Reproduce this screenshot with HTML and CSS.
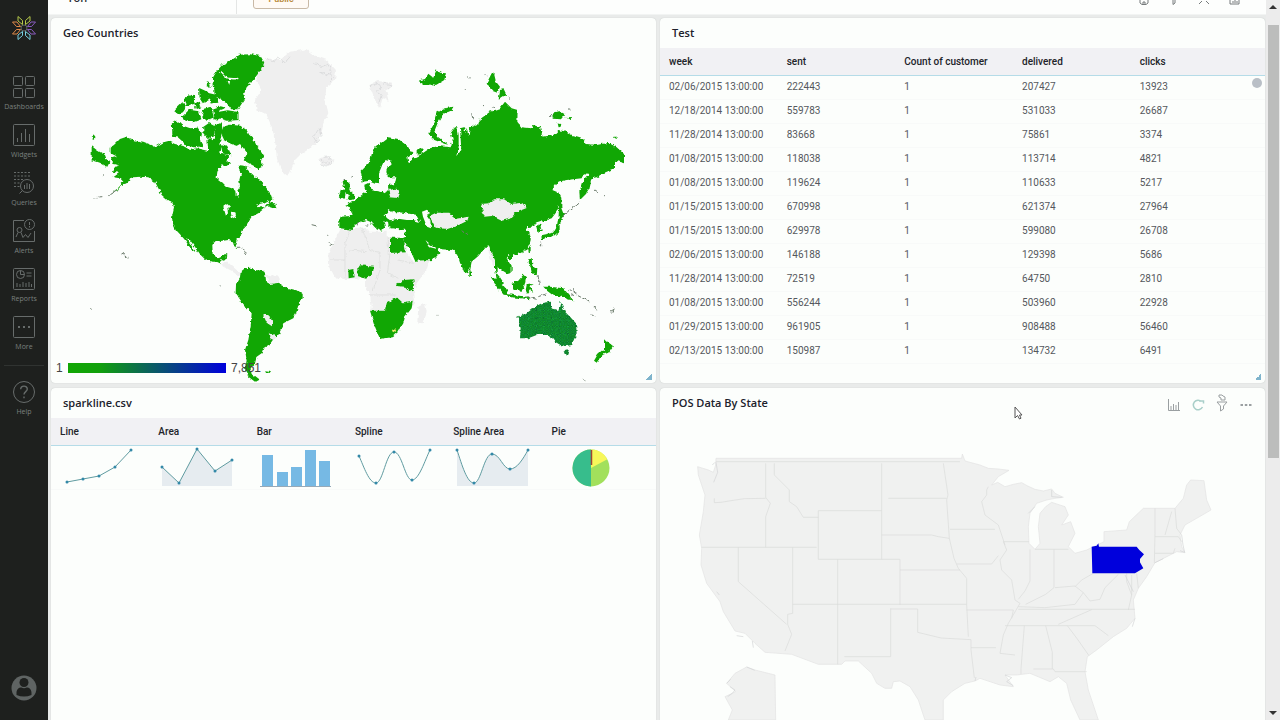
FILE: index.html
```html
<!DOCTYPE html>
<html lang="en">
<head>
<meta charset="utf-8">
<title>Dashboard</title>
<link rel="stylesheet" href="styles.css">
</head>
<body>
<nav class="sidebar">
  <a class="brand" href="#" aria-label="Home">
    <svg width="28" height="28" viewBox="-14 -14 28 28" fill="none" stroke-width="1">
      <circle r="3" stroke="#5d6664"/>
      <g stroke="#b5c84a"><path d="M-6-11.500V-7L-1.500-3.500V-7.500z"/><path d="M6-11.500V-7L1.500-3.500V-7.500z"/></g>
      <g stroke="#78cfe0"><path d="M-6 11.500V7L-1.500 3.500V7.500z"/><path d="M6 11.500V7L1.500 3.500V7.500z"/></g>
      <g stroke="#e08a4a"><path d="M-11.500-6H-7L-3.500-1.500H-7.500z"/><path d="M-11.500 6H-7L-3.500 1.500H-7.500z"/></g>
      <g stroke="#8a5cc0"><path d="M11.500-6H7L3.500-1.500H7.500z"/><path d="M11.500 6H7L3.500 1.500H7.500z"/></g>
    </svg>
  </a>
  <a class="item" href="#"><svg class="ico" viewBox="0 0 24 24"><rect x="1.500" y="1.500" width="9" height="9" rx="1"/><rect x="13.500" y="1.500" width="9" height="9" rx="1"/><rect x="1.500" y="13.500" width="9" height="9" rx="1"/><rect x="13.500" y="13.500" width="9" height="9" rx="1"/></svg><span>Dashboards</span></a>
  <a class="item" href="#"><svg class="ico" viewBox="0 0 24 24"><rect x="1.500" y="1.500" width="21" height="21" rx="1"/><path d="M5.500 19v-4M9.500 19v-9M13.500 19V6M17.500 19v-8"/></svg><span>Widgets</span></a>
  <a class="item" href="#"><svg class="ico" viewBox="0 0 24 24"><path stroke-dasharray="2 1.500" d="M2 1.500h17M2 5h17M2 8.500h10M2 12h6M2 15.500h6"/><circle cx="15" cy="15" r="6.500"/><path d="M10.500 19.500L7.500 22.500M12.500 18v-4M15 18v-6M17.500 18v-5"/></svg><span>Queries</span></a>
  <a class="item" href="#"><svg class="ico" viewBox="0 0 24 24"><path d="M12 1.500H1.500v21h21V12"/><circle cx="17.500" cy="5.500" r="5"/><path d="M17.500 3v3M17.500 7v1.500"/><circle cx="7.500" cy="11" r="2.500"/><path d="M4 18l2-4.500M9 13.500l2 5 2.500-3 2.500 3 3-4.500"/></svg><span>Alerts</span></a>
  <a class="item" href="#"><svg class="ico" viewBox="0 0 24 24"><rect x="1.500" y="1.500" width="21" height="21" rx="1"/><circle cx="8.500" cy="7.500" r="4"/><path d="M8.500 3.500v4h4M14.500 6h5M14.500 9h5M5 20v-4M8 20v-3M11 20v-5M14 20v-4M17 20v-5M19.500 20v-3"/></svg><span>Reports</span></a>
  <a class="item" href="#"><svg class="ico" viewBox="0 0 24 24"><rect x="1.500" y="1.500" width="21" height="21" rx="1"/><path stroke-width="1.800" d="M6 12h2M11 12h2M16 12h2"/></svg><span>More</span></a>
  <hr class="rule">
  <a class="item" href="#"><svg class="ico" viewBox="0 0 24 24"><circle cx="12" cy="12" r="10.500"/><path stroke-width="1.400" d="M8.700 9.300c0-4.300 6.600-4.100 6.600-.3 0 2.600-3.300 2.600-3.300 5.400M12 16.500v1.800"/></svg><span>Help</span></a>
  <a class="avatar" href="#" aria-label="Account">
    <svg width="26" height="26" viewBox="0 0 26 26"><circle cx="13" cy="13" r="12.500" fill="#5f6463"/><circle cx="13" cy="7.500" r="4.500" fill="#1e201e"/><path d="M5.500 20v-2c0-3.500 2-5.500 5-5.500 1.500 1 3.500 1 5 0 3 0 5 2 5 5.500v2q-7.500 3-15 0z" fill="#1e201e"/></svg>
  </a>
</nav>

<main class="main">
  <header class="topbar">
    <div class="tab">Yoh</div>
    <button class="pill" type="button">Public</button>
    <div class="tools">
      <svg class="tool" viewBox="0 0 12 12"><path d="M2 2v8l2 1.500h4l2-1.500V2M5 11V9h2v2"/></svg>
      <svg class="tool" viewBox="0 0 12 12"><path d="M2 1h8L7 6v4L5 11.500V6z"/></svg>
      <svg class="tool" viewBox="0 0 12 12"><path d="M1 11l3-3M11 11L8 8"/></svg>
      <svg class="tool" viewBox="0 0 12 12"><path d="M2 2h9v9H2zM5 8v2M7 7v3M9 8v2"/></svg>
    </div>
  </header>

  <div class="board">
    <section class="panel">
      <div class="head"><h2>Geo Countries</h2></div>
      <svg class="map" viewBox="51 48 605 335" role="img" aria-label="World map">
        <defs>
          <linearGradient id="scale"><stop offset="0" stop-color="#11a704"/><stop offset=".2" stop-color="#11a00c"/><stop offset="1" stop-color="#0000dc"/></linearGradient>
          <pattern id="dots" width="8" height="8" patternUnits="userSpaceOnUse"><rect width="8" height="8" fill="#0c8e12"/><circle cx="2" cy="2" r="1.700" fill="#18a850"/><circle cx="6" cy="6" r="1.700" fill="#18a850"/><circle cx="6" cy="2" r="1.500" fill="#0c4a50"/><circle cx="2" cy="6" r="1.500" fill="#0c4a50"/></pattern>
          <filter id="coast" x="-5%" y="-5%" width="110%" height="110%" color-interpolation-filters="sRGB"><feTurbulence type="fractalNoise" baseFrequency=".25" numOctaves="2" seed="4" result="n"/><feDisplacementMap in="SourceGraphic" in2="n" scale="4" xChannelSelector="R" yChannelSelector="G"/></filter>
        </defs>
        <g filter="url(#coast)">
        <!-- Americas -->
        <g transform="translate(80 40) scale(.33333)">
          <path class="nodata" d="M530 80L560 55 600 60 630 35 680 28 700 45 740 60 768 90 765 120 740 140 735 175 745 220 730 250 725 280 705 315 690 325 660 345 645 360 630 400 620 408 605 395 590 350 585 300 575 260 560 225 530 210 525 180 545 150 530 120zM715 355L740 350 762 360 750 378 725 372zM425 668L445 668 470 690 482 700 478 708 455 692 430 680zM556 703L598 710 600 726 570 732z"/>
          <path class="coastline" d="M560 55l20 10 15-12 20 15 15-18M700 70l25 10 20-8 10 20-15 15-20-12M745 100l15 12-10 12M700 290l18-25 5 22-12 22zM720 358l15 12 15-14"/>
          <path class="data" d="M92 323L105 312 120 297 138 291 160 300 190 305 215 315 225 320 245 308 265 303 285 312 310 318 330 330 350 325 385 333 400 325 425 340 445 345 440 362 450 370 440 378 425 376 412 395 410 414 425 425 440 440 455 445 466 452 467 468 473 473 476 460 472 452 480 440 478 420 483 400 475 385 480 376 500 378 515 385 530 410 538 418 548 430 560 445 572 462 578 480 570 488 585 490 590 508 575 503 560 498 550 508 535 520 515 530 505 545 497 560 487 570 485 585 470 598 467 610 472 625 462 618 458 603 445 600 420 604 405 604 397 615 398 640 403 652 415 655 425 650 430 643 442 643 440 655 432 662 425 660 420 670 410 665 395 665 375 658 362 645 350 628 330 600 318 590 335 618 345 636 335 630 315 600 300 583 288 570 278 550 276 530 282 505 280 492 262 480 245 465 235 445 225 425 205 412 185 410 160 412 150 415 145 428 130 432 120 442 88 466 118 440 130 425 120 415 100 412 118 398 98 395 105 380 118 375 98 372 92 362 95 352 108 348 92 340z
          M35 318L50 330 75 345 80 358 88 368 82 380 60 368 35 360zM35 290l8-4 4 6-8 5z
          M482 695L495 685 512 683 525 690 550 692 556 705 558 725 570 732 598 728 602 735 625 745 655 752 668 762 668 775 655 795 650 815 640 835 610 850 605 865 595 885 580 898 570 912 550 925 545 940 530 950 525 970 512 985 515 1000 538 1018 525 1025 505 1010 495 990 500 960 495 930 505 900 512 860 515 820 500 805 485 785 467 760 468 735 480 715z
          M556 994l14 2-4 6-10-2z"/>
          <path class="data arctic" d="M402 112L412 95 430 75 460 60 480 47 510 45 540 50 550 68 543 85 528 105 513 125 498 140 490 160 493 175 483 190 473 205 455 205 442 188 420 175 407 165 405 150 400 135z
          M418 218l25-5 30 5v20l-30 2-26-8z
          M278 252L290 244 310 260 330 267 353 266 363 280 358 300 366 316 345 320 320 315 310 303 295 290 280 288z
          M432 262L450 257 480 260 498 272 505 285 518 297 528 320 540 332 551 350 540 355 545 372 536 388 522 375 505 366 494 360 502 345 487 325 470 315 455 310 435 300 428 285z
          M372 262l15-10 15 8-2 25-15 10-12-12zM406 258l16-6 4 20-10 35-8-5zM385 302l22-4 15 22-8 18-27-8zM425 315l15 5 10 22-20-4z
          M285 212l22-22 10 10-10 15-12 5zM315 178l15-12 13 6-3 18-18 4zM308 232l20-20 27 4 6 20-22 8-24-4zM360 148l22 10 4 20-15 8-10-15zM388 162l18 4 6 20-18 2zM366 210l25-6 8 27-22 8zM402 210l12-4 2 28-10 2zM383 130l6 2v8l-6-3zM345 192l12-4 4 12-12 4zM412 200l14-4 4 8-12 5z"/>
          <path class="sea" d="M420 97q18 28 56 20l-2-4q-36 6-50-18zM443 123l4 10 3-10zM402 195l20-8 22 8-5 5-17-4-18 4zM465 320l15-8 20 25-10 25-22 15-8-10 8-15-15-15zM430 500l12-8 8 8-8 5 2 15-6 8zM452 515l14 2 2 12-12 6zM528 494l20-4 20-10-3 10-12 14-6-6-10 4zM500 378l35 15 3 25-15-10-22-20z"/>
          <path class="nodata" d="M550 825L565 825 580 848 578 860 560 848zM567 878L592 890 580 900 568 893z"/>
          <path class="isle" d="M88 464l22-14M40 474l12-2M55 471l12-1M68 407h3M95 410h4M474 622q15-4 26 20M125 640l8 2M134 648l12 6M420 738l5 3M30 806l5 2M695 554l16 4M744 585l3 4M745 608l4 2"/>
        </g>
        <!-- Europe, Africa, Asia, Oceania -->
        <g transform="translate(320 40) scale(.33333)">
          <path class="nodata" d="M60 570L125 562 150 575 205 575 252 580 258 600 262 640 280 665 328 660 320 690 290 730 282 750 285 790 250 830 195 830 152 812 155 800 150 765 135 740 135 718 110 715 75 718 45 712 28 680 25 640 45 600zM295 800l20-10 5 25-12 35-16-2zM148 135l25-12 45 5-5 15-15 10 8 30-18-10-8 30-15-20zM505 630l15-18 12 35-12 30-8-20z"/>
          <path class="border" d="M95 565l-20 45v50H30M125 562l25 70 30 5v50M205 575v70M90 630l50 5M75 660v50M180 690l-20 60M210 640l-8 60 30 15M150 765h80M235 660l45 10"/>
          <path class="coastline" d="M150 140l22-10 10 12-12 14 14 10-8 24M190 130l25 4-10 12M0 370l15 8 20-8-4-20-20 2"/>
          <path class="data" d="M58 530L92 528 95 518 88 502 76 494 100 485 125 465 138 455 132 435 146 428 152 450 180 455 205 450 205 443 180 430 165 428 150 422 128 425 122 395 150 365 158 330 175 315 205 292 235 297 262 318 278 340 262 352 265 368 278 358 290 350 300 345 330 325 355 318 392 322 398 300 392 280 405 262 412 262 416 285 416 320 412 345 424 330 420 265 432 262 436 280 440 264 446 285 450 262 475 252 480 238 510 215 540 205 555 185 575 205 593 210 592 245 605 262 635 265 640 255 660 262 668 290 700 285 715 270 740 275 765 290 790 298 800 312 830 315 865 308 890 322 912 342 912 370 885 362 885 385 850 400 830 412 815 415 808 445 795 465 780 480 778 455 785 430 808 402 792 400 785 415 740 420 715 425 697 450 720 460 722 485 710 515 695 535 665 545 650 550 632 560 618 562 632 590 632 600 628 615 620 630 600 640 580 645 578 655 565 645 560 655 575 680 575 695 560 700 545 690 530 680 530 700 540 712 552 730 545 735 530 718 525 690 525 660 515 640 505 615 490 630 475 648 455 665 450 690 440 700 432 695 420 665 412 640 395 630 365 628 350 625 330 612 316 600 330 622 355 628 358 640 340 660 285 662 275 640 260 615 250 595 258 575 255 566 235 568 215 565 205 560 200 545 190 540 195 560 185 572 175 560 165 545 180 562 172 570 150 545 138 540 120 545 105 555 98 570 85 568 58 565z
          M55 470l8-22 14 2-2 22-12 6zM68 425l12-5 10 15-2 15 14 12 2 15-22 6 5-18-12-10zM325 280l12-20 12-40 25-15 26-5-4 12-28 12-15 25-10 25 12 18 30 22-10-2-38-14zM295 122l20-5 10-16 15 12 10-25 10 10 18 2-5 20-25 15-8-2-15 2-12 0zM500 130l15-30 8 5 5 20 12 15-8 18-14-5-14-15zM540 150l10-2 8 16-12 8-10 8zM697 218l20-5 18 10-12 15-25-2zM735 230l20 2-5 8zM710 250l10 2 4 12-12-6zM880 290l14 0-5 7zM290 332l18-8-4 18-14 2zM718 460l6 10v35l8 20-10 15-6-10z
          M715 530l12 10-8 15v18l-18 15-35 10-2-12 35-8 12-20zM648 558l12-6 5 20-12 8zM624 625l8-5v12l-5 6zM562 648l15-2v10l-10 2zM448 695h8v12l-8 2z
          M210 593h40l8 44-48 2zM85 690l15-3 4 25-18 3zM112 688l8-12 42 4-4 22-20 14-25-8zM230 732l22-12 28-2 2 28-14 8-12-14-28-2zM150 812L195 812 200 790 230 772 250 790 278 785 275 805 255 830 250 850 235 875 215 892 180 897 165 860z
          M512 710l20 8 28 30 6 18-15-2-22-25zM560 762l70 10-2 6-65-8zM575 730l20-8 15-18 8 8-5 28-8 12-25-3zM620 735l22-4-12 8 10 16-10-4-8 10-5-10zM625 655l10-2 2 22 10 12-6 4-14-15zM632 682l20 2-2 22-15-8zM670 740l20 0 40 5 15 18 15 18-20-3-20-10-18 0-20-15zM855 898l6 6 18 14-14 20-16 6 6-14zM850 928l5 10-15 15-10 15-8-6 12-20z"/>
          <path class="sea" d="M205 358l-16 12-12 28v30l10 14-6 12 8 4 16-8-2-14 22-4 4-20h-24l-6-16 2-12 14-14zM190 525l14-2 2-14 12 8 20 0 15 2 35 5 12 22-20-6-20 0-25-4-25 5zM306 515l15-6 8 8-8 12 10 14 2 22-12-5-12-30zM196 545l8 0 2 12-12 8zM200 574h55v18H200z"/>
          <path class="nodata" d="M204 450l25-4 10 12-4 16-24-2zM328 528l20-10 40 0 20 18 38-6-4 12-30 15-30 10-35-4-8-15zM482 492l25-2 15-12 30 0 22 14 32-4 14 16-30 12-20 20-25 6-30-14-22 2z"/>
          <g transform="translate(0 450)"><path fill="url(#dots)" d="M592 380L620 370 645 350 665 340 690 335 695 355 715 360 722 335 735 365 750 380 768 400 770 430 755 465 730 470 705 455 690 435 650 435 625 445 600 445 602 415zM730 480l17-2-5 16-6 4z"/></g>
          <path class="isle" d="M444 110l5 4M433 146l5 2M486 196l4 2M515 200l8 3M455 220l4 18M494 104l8 4M564 174l6 4M692 222v12M745 206l6 2M822 448l12 8M852 466l3 2M728 528l50-42M620 770l30 8M655 770l22-8M745 752l15-4 5 10-12 8M770 765l35 18M822 798l8 10M815 824l12 8M870 815l14-8M876 818l4-8M22 586h5M26 608h4M28 618l12-8M112 548v8M136 555h12M654 705l4 30M662 608v8M350 826h2M822 990l3 2M788 1018l5 4M425 572l16 12M70 420l5 2M92 412l3-4"/>
          <path d="M216 870l10-6 2 10-8 6z" fill="#efe86a"/>
        </g>
        </g>
        <rect x="68" y="363" width="158" height="10" fill="url(#scale)"/>
        <text class="legend" x="56" y="372">1</text>
        <text class="legend" x="231" y="372">7,851</text>
      </svg>
      <i class="grip"></i>
    </section>

    <section class="panel">
      <div class="head"><h2>Test</h2></div>
      <table class="grid five">
        <thead><tr><th>week</th><th>sent</th><th>Count of customer</th><th>delivered</th><th>clicks</th></tr></thead>
        <tbody>
          <tr><td>02/06/2015 13:00:00</td><td>222443</td><td>1</td><td>207427</td><td>13923</td></tr>
          <tr><td>12/18/2014 13:00:00</td><td>559783</td><td>1</td><td>531033</td><td>26687</td></tr>
          <tr><td>11/28/2014 13:00:00</td><td>83668</td><td>1</td><td>75861</td><td>3374</td></tr>
          <tr><td>01/08/2015 13:00:00</td><td>118038</td><td>1</td><td>113714</td><td>4821</td></tr>
          <tr><td>01/08/2015 13:00:00</td><td>119624</td><td>1</td><td>110633</td><td>5217</td></tr>
          <tr><td>01/15/2015 13:00:00</td><td>670998</td><td>1</td><td>621374</td><td>27964</td></tr>
          <tr><td>01/15/2015 13:00:00</td><td>629978</td><td>1</td><td>599080</td><td>26708</td></tr>
          <tr><td>02/06/2015 13:00:00</td><td>146188</td><td>1</td><td>129398</td><td>5686</td></tr>
          <tr><td>11/28/2014 13:00:00</td><td>72519</td><td>1</td><td>64750</td><td>2810</td></tr>
          <tr><td>01/08/2015 13:00:00</td><td>556244</td><td>1</td><td>503960</td><td>22928</td></tr>
          <tr><td>01/29/2015 13:00:00</td><td>961905</td><td>1</td><td>908488</td><td>56460</td></tr>
          <tr><td>02/13/2015 13:00:00</td><td>150987</td><td>1</td><td>134732</td><td>6491</td></tr>
        </tbody>
      </table>
      <i class="knob"></i>
      <i class="grip"></i>
    </section>

    <section class="panel">
      <div class="head"><h2>sparkline.csv</h2></div>
      <table class="grid six">
        <thead><tr><th>Line</th><th>Area</th><th>Bar</th><th>Spline</th><th>Spline Area</th><th>Pie</th></tr></thead>
        <tbody><tr>
          <td><svg class="spark" viewBox="0 0 78 42"><path class="line" d="M7 36L23 33 39 30 55 21 71 4"/><path class="pts" d="M7 36h0M23 33h0M39 30h0M55 21h0M71 4h0"/></svg></td>
          <td><svg class="spark" viewBox="0 0 78 42"><path class="fill" d="M4 21L21 37 39 3 57 25 74 14V40H4z"/><path class="line" d="M4 21L21 37 39 3 57 25 74 14"/><path class="pts" d="M4 21h0M21 37h0M39 3h0M57 25h0M74 14h0"/></svg></td>
          <td><svg class="spark" viewBox="0 0 78 42"><path fill="#76b9e4" d="M5 9h11v31H5zM20 26h11v14H20zM34 21h11v19H34zM48 4h11v36H48zM62 15h11v25H62z"/><path stroke="#96a9b8" d="M3 40.500h71"/></svg></td>
          <td><svg class="spark" viewBox="0 0 78 42"><path class="line" d="M4 10C9 21 14 37 21 37S31 6 39 6 50 34 57 34 70 14 75 4"/><path class="pts" d="M4 10h0M21 37h0M39 6h0M57 34h0M75 4h0"/></svg></td>
          <td><svg class="spark" viewBox="0 0 78 42"><path class="fill" d="M4 4C9 19 14 37 21 37S31 8 39 8 50 23 57 23 70 13 75 4V40H4z"/><path class="line" d="M4 4C9 19 14 37 21 37S31 8 39 8 50 23 57 23 70 13 75 4"/><path class="pts" d="M4 4h0M21 37h0M39 8h0M57 23h0M75 4h0"/></svg></td>
          <td><svg class="spark" viewBox="0 0 78 42"><circle cx="39" cy="22" r="18.500" fill="#a2e05c"/><path fill="#37bd8c" d="M39 3.500a18.500 18.500 0 0 0 0 37z"/><path fill="#f7f75a" d="M39 22V3.500a18.500 18.500 0 0 1 16.300 9.800z"/><path stroke="#a04434" stroke-width="1.500" d="M39.500 4v15"/></svg></td>
        </tr></tbody>
      </table>
    </section>

    <section class="panel">
      <div class="head">
        <h2>POS Data By State</h2>
        <div class="actions">
          <button type="button" aria-label="Chart"><svg viewBox="0 0 14 14"><path d="M1.500 1v11.500H13M4 12V8M6.500 12V6M9 12V7M11.500 12V4"/></svg></button>
          <button type="button" aria-label="Refresh"><svg viewBox="0 0 14 14"><path stroke="#a9cfc9" stroke-width="1.500" d="M10.500 3.500A4.800 4.800 0 1 0 11.500 9M8 3h4.500v2.500"/></svg></button>
          <button type="button" aria-label="Filter"><svg class="tall" viewBox="0 0 14 18"><path d="M2 8h10L8.500 12v3L5.500 17v-5zM6 6V4l-2-1V1h3l1 1 2 1v3z"/></svg></button>
          <button type="button" aria-label="More"><svg viewBox="0 0 14 14"><path stroke-width="2" d="M1.500 7h2.500M5.800 7h2.500M10 7h2.500"/></svg></button>
        </div>
      </div>
      <svg class="map" viewBox="660 418 605 335" role="img" aria-label="United States map">
        <g transform="translate(655 385) scale(.33333)">
          <path class="state" d="M183 220L920 220 922 207 930 228 975 240 1000 250 1030 252 1062 256 1030 275 1010 300 1028 292 1050 305 1075 298 1100 293 1118 303 1140 313 1165 318 1190 312 1200 325 1225 337 1200 340 1175 345 1145 355 1125 385 1120 425 1122 475 1140 493 1155 475 1150 425 1155 385 1172 365 1190 352 1230 365 1240 390 1220 420 1247 410 1260 445 1240 485 1260 505 1295 495 1347 470 1347 440 1415 435 1423 410 1465 370 1560 370 1585 340 1595 300 1607 285 1647 287 1655 345 1668 375 1625 400 1590 420 1575 450 1580 485 1590 503 1565 500 1500 533 1475 575 1450 610 1435 645 1440 700 1415 730 1375 755 1325 795 1297 815 1290 860 1300 915 1330 1005 1275 1005 1247 945 1235 895 1210 875 1185 890 1125 865 1085 870 1050 870 1075 905 1035 900 975 880 960 888 930 895 890 920 865 945 865 1005 810 1005 790 945 765 905 735 888 715 890 710 910 690 910 665 895 650 865 610 828 570 828 560 838 490 838 410 808 330 802 300 775 270 745 240 738 205 680 195 650 155 595 138 540 140 490 133 450 145 380 150 330 130 270 128 245 160 255 175 262 182 240zM215 895L240 865 275 846 300 855 360 870 362 1005 220 1005 232 975 210 935 242 920z"/>
          <path class="border" d="M183 230H915M178 340v13l20-1 30-5 40-6 64-1M332 235v102l14 18-14 40v92M140 487H485M358 235v35l45 45v35l22 15 20 32h45M490 377H680M490 377V523H735V660M680 235V523M700 340H875M865 235l14 95-4 15 8 115M680 450H830l20 5 33 5M883 460l14 60 13 30 25 30v80l5 95M885 433h135M905 537h105l20-25M735 555H915M250 487V590L395 718M413 487V685l-15 3v30l12 30-20 50M548 523V838M413 658H935M707 670V815H568M707 672H788V742l70 17 90 5M948 764v30l10 85M935 675h140l-5 25M948 788h75M1000 305l-5 10v15l-15 20 10 40 40 30 20 60M1045 470h77M1125 493v95l-15 30-20 25M1045 470l10 25-20 30 5 30 30 30 10 60 15 10-35 60-15 35-10 55 45 5M1140 493H1240M1197 493v115l-25 20-60 30M1090 665l80 3 90-10 25-35-25-20-60 5M1260 605l20-20 35-20V565M1285 623l20 25 30-5 15-35 40-40M1090 673h350M1050 722h190l80 0 40 30M1210 718l50-22 50-22M1108 722l-10 130v15M1172 722l20 80v50M1135 852h60l5 8 95 0M1237 722l30 40 35 50M1500 370v75l-2 90M1500 455h70l10 15M1530 450l20-70M1560 370l5 60 15 20M1500 505h55l5-15M1415 565v25l15 40-10 45M1430 570v60M1445 565l5 45"/>
          <path class="coastline" d="M183 232l5 30-12 30M180 232l-8 8M275 846l24 10M215 895l12-12M225 905l15 10-8 10-14 10M245 752l20 3M292 768l3 20M1050 870l20 8-15 12 20 12M1580 450l4 30 5 22-14-5M1500 533l25-12M1410 570l15 30 10 20M1440 700l-8 25M1120 385l20-20M960 888l3-12M185 620l8 10M1190 315v20l30 2"/>
          <path fill="#0000dc" d="M1310 485L1325 482 1330 475 1332 485 1445 485 1453 495 1467 508 1455 522 1455 532 1465 550 1440 565 1312 565z"/>
        </g>
      </svg>
      <svg class="cursor" width="12" height="16" viewBox="0 0 12 16"><path d="M2 1v11l2.500-2.500L6.500 13l1.500-.8L6.500 9H9z" fill="#fff" stroke="#555"/></svg>
    </section>
  </div>
</main>

<aside class="scrollbar" aria-hidden="true"><i class="up"></i><i class="thumb"></i><i class="down"></i></aside>
</body>
</html>
```
FILE: styles.css
```css
* { box-sizing: border-box; }
body { margin: 0; height: 100vh; display: flex; overflow: hidden; background: #e9ebea; font-family: Roboto, "Liberation Sans", sans-serif; color: #2b2d33; }

.sidebar { flex: 0 0 48px; display: flex; flex-direction: column; align-items: center; background: #1e201e; font-family: "Open Sans", sans-serif; }
.brand { height: 28px; margin: 14px 0 33px; }
.item { display: flex; flex-direction: column; align-items: center; gap: 1px; height: 48px; color: #7b807f; font-size: 7px; line-height: 14px; text-decoration: none; }
.ico { width: 24px; height: 24px; fill: none; stroke: #676c6b; stroke-width: 1; }
.rule { width: 40px; margin: 2px 0 14px; border: 0; border-top: 1px solid #303331; }
.avatar { height: 26px; margin-top: auto; margin-bottom: 19px; }

.main { flex: 1; min-width: 0; display: flex; flex-direction: column; }
.topbar { flex: 0 0 15px; display: flex; align-items: flex-end; overflow: hidden; background: #fdfefd; border-bottom: 1px solid #f2f4f3; }
.tab { width: 189px; padding: 0 0 8px 19px; border-right: 1px solid #e4e6e5; font: 600 11px/16px "Open Sans", sans-serif; }
.pill { width: 56px; margin: 0 0 5px 16px; padding: 2px 0 3px; border: 1px solid #c9b9a6; border-radius: 3px; background: #fffaf5; color: #b98a3c; font: 600 9px/12px Roboto, sans-serif; }
.tools { display: flex; gap: 18px; margin-left: auto; padding: 0 26px 9px 0; }
.tool { width: 12px; height: 12px; fill: none; stroke: #777b7c; }

.board { flex: 1; min-height: 0; display: grid; grid-template-columns: 1fr 1fr; grid-auto-rows: min-content; gap: 5px 4px; padding: 3px 1px 0 3px; overflow: hidden; }
.panel { position: relative; min-width: 0; background: #fcfefc; border-radius: 4px; box-shadow: 0 0 1px #b5b9b9; overflow: hidden; }
.head { display: flex; align-items: flex-start; justify-content: space-between; height: 30px; padding: 6px 11px 0 12px; }
h2 { margin: 0; font: 600 11px/17px "Open Sans", sans-serif; color: #20212b; }
.actions { display: flex; gap: 8px; padding-top: 3px; }
.actions button { width: 16px; height: 16px; display: grid; place-items: center; padding: 0; border: 0; background: none; }
.actions svg { width: 14px; height: 14px; fill: none; stroke: #9a9fa1; }
.actions .tall { height: 18px; margin-top: -5px; }

.map { display: block; width: 100%; height: auto; }
.data { fill: #11a704; }
.arctic { stroke: #11a704; stroke-width: 5; }
.nodata { fill: #efefef; }
.sea { fill: #fcfefc; }
.state { fill: #f0f1f0; stroke: #e2e3e2; stroke-width: 2; }
.border { fill: none; stroke: #dadbda; stroke-width: 2; }
.coastline { fill: none; stroke: #d2d3d4; stroke-width: 2; }
.isle { fill: none; stroke: #6b7b6b; stroke-width: 3; }
.legend { font: 12px "Liberation Sans", sans-serif; fill: #444; }

.grid { width: 100%; table-layout: fixed; border-collapse: collapse; font-size: 10px; }
.grid th { height: 27px; padding: 0 0 0 9px; background: #f1f1f4; border-bottom: 1px solid #b5dce8; font-weight: 500; text-align: left; color: #22242a; }
.grid td { height: 24px; padding: 0 0 1px 9px; color: #55585d; border-bottom: 1px solid #f8faf9; }
.five th { width: 19.45%; }
.five th:last-child { width: auto; }
.six th { width: 16.25%; }
.six th:last-child { width: auto; }
.six td { height: 44px; }
.spark { display: block; width: 78px; height: 42px; fill: none; }
.line { stroke: #5f9ba0; }
.fill { fill: #e6ecf0; }
.pts { stroke: #3389a8; stroke-width: 3; stroke-linecap: round; }

.grip { position: absolute; right: 4px; bottom: 3px; width: 6px; height: 6px; background: linear-gradient(135deg, transparent 50%, #7fb4cc 50%); }
.knob { position: absolute; right: 3px; top: 60px; width: 10px; height: 10px; border-radius: 50%; background: #b9bfc6; }
.cursor { position: absolute; left: 353px; top: 18px; }

.scrollbar { flex: 0 0 14px; display: flex; flex-direction: column; align-items: center; justify-content: space-between; padding: 5px 0; background: #ececec; }
.up { border: 4px solid transparent; border-top: 0; border-bottom-color: #333; }
.down { border: 4px solid transparent; border-bottom: 0; border-top-color: #333; }
.thumb { width: 11px; height: 61%; margin: 16px 0 auto; background: #bcbdbc; }
```
